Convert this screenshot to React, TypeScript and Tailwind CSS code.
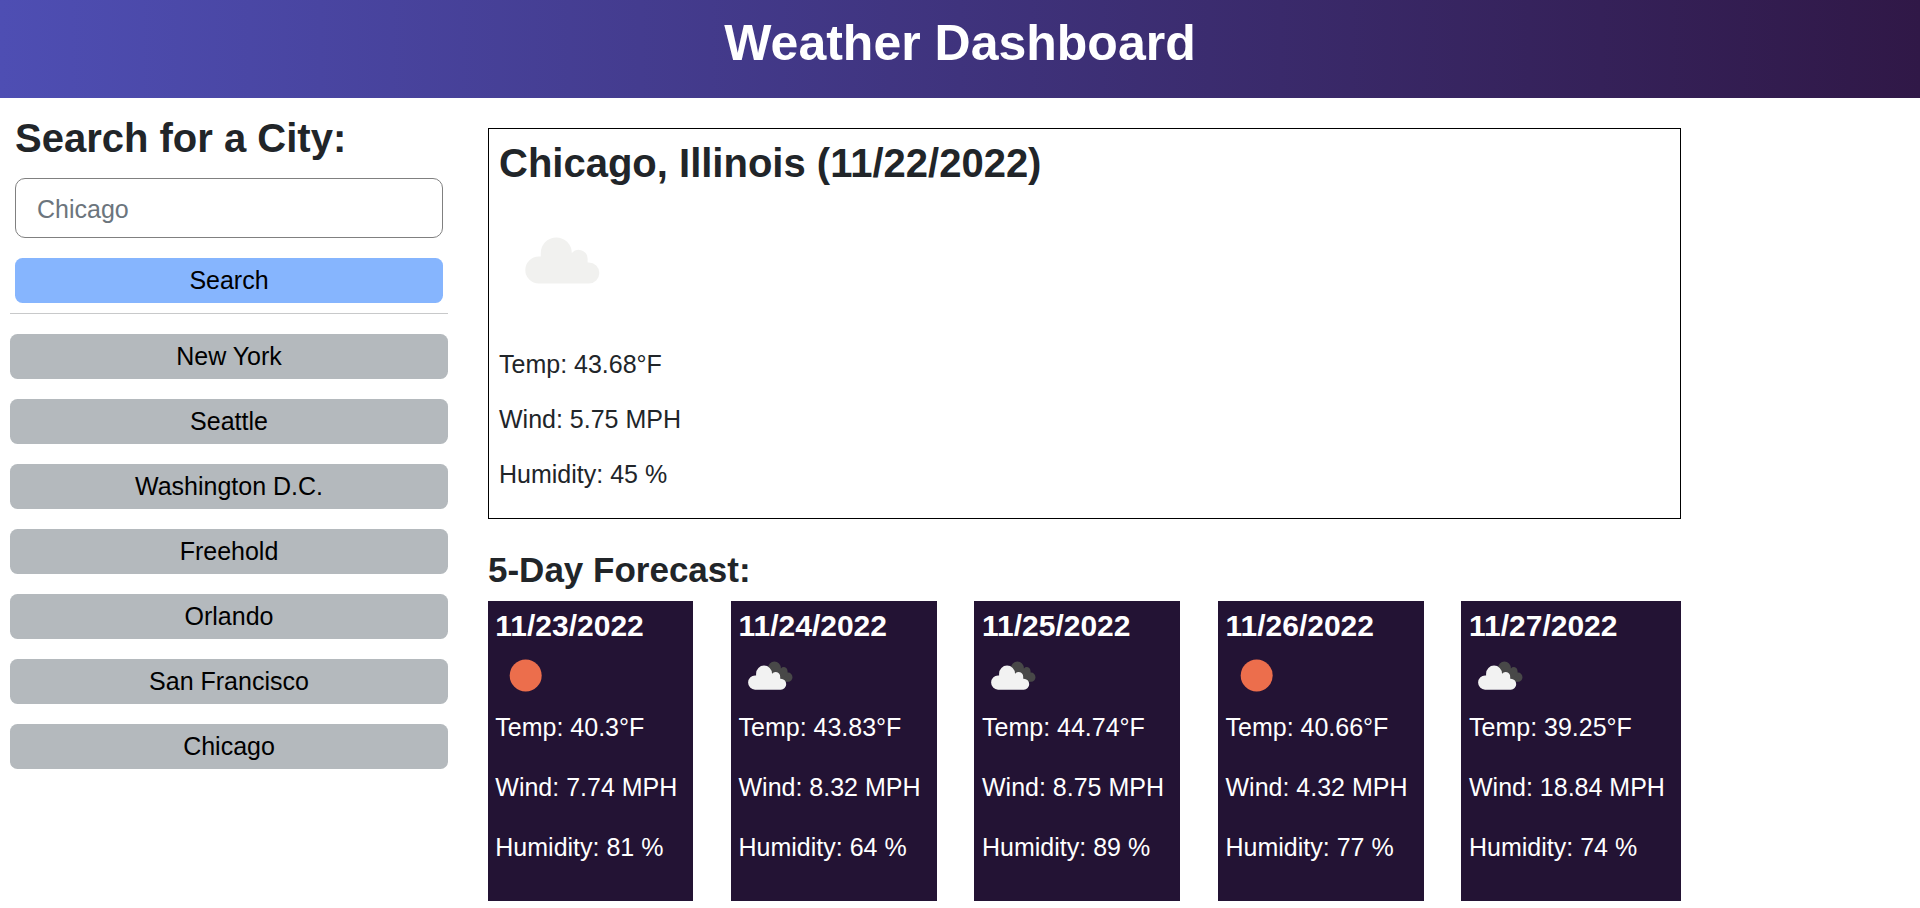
const cities = ["New York", "Seattle", "Washington D.C.", "Freehold", "Orlando", "San Francisco", "Chicago"];

type Day = { date: string; icon: "sun" | "clouds"; temp: string; wind: string; humidity: string };

const days: Day[] = [
  { date: "11/23/2022", icon: "sun", temp: "40.3", wind: "7.74", humidity: "81" },
  { date: "11/24/2022", icon: "clouds", temp: "43.83", wind: "8.32", humidity: "64" },
  { date: "11/25/2022", icon: "clouds", temp: "44.74", wind: "8.75", humidity: "89" },
  { date: "11/26/2022", icon: "sun", temp: "40.66", wind: "4.32", humidity: "77" },
  { date: "11/27/2022", icon: "clouds", temp: "39.25", wind: "18.84", humidity: "74" },
];

// Cloud outline, 74 x 46 units.
const CLOUD =
  "M13.5 46 A13.5 13.5 0 0 1 13.5 19 H15.5 V15.5 A15.5 15.5 0 0 1 46.5 15.5 A9 9 0 0 1 62.3 21.5 V25 H63.5 A10.5 10.5 0 0 1 63.5 46 Z";

function CloudIcon() {
  return (
    <svg className="block size-[125px]" viewBox="0 0 125 125">
      <path d={CLOUD} transform="translate(26.3 45.5)" fill="#f1f1ef" />
    </svg>
  );
}

function DayIcon({ kind }: { kind: Day["icon"] }) {
  return (
    <svg className="block size-[62px]" viewBox="0 0 62 62">
      {kind === "sun" ? (
        <circle cx="30.7" cy="31.5" r="16" fill="#ec6e4c" />
      ) : (
        <>
          <path d={CLOUD} transform="translate(22.4 17.6) scale(.42 .44)" fill="#484848" />
          <path d={CLOUD} transform="translate(9.1 21.5) scale(.515 .525)" fill="#f2f2f2" />
        </>
      )}
    </svg>
  );
}

export default function App() {
  return (
    <div className="h-[908px] overflow-hidden bg-white font-['Liberation_Sans',Arial,sans-serif] text-[25px] leading-[30px] text-[#212529]">
      <header className="h-[98px] bg-[linear-gradient(90deg,#4e4eb3,#301847)] pt-[13px] text-center">
        <h1 className="text-[50px] leading-[60px] font-bold text-white">Weather Dashboard</h1>
      </header>
      <div className="flex">
        <aside className="ml-[10px] w-[438px] pt-[16px]">
          <div className="px-[5px]">
            <h2 className="text-[40px] leading-[48px] font-bold">Search for a City:</h2>
            <input
              className="mt-4 block h-[60px] w-full rounded-[10px] border border-[#808080] bg-white px-[21px] pt-[2px] placeholder:text-[#6c757d]"
              placeholder="Chicago"
            />
            <button className="mt-5 block h-[45px] w-full rounded-[7.5px] bg-[#86b5fe] pb-[2px] text-black">
              Search
            </button>
          </div>
          <hr className="mt-[10px] border-[#c8c9ca]" />
          <div className="mt-5 flex flex-col gap-5">
            {cities.map((city) => (
              <button key={city} className="h-[45px] rounded-[7.5px] bg-[#b4b9bd] pb-[2px] text-black">
                {city}
              </button>
            ))}
          </div>
        </aside>
        <main className="ml-10 w-[1193px] pt-[30px]">
          <section className="h-[391px] border border-black px-[10px] pt-[10px]">
            <h2 className="text-[40px] leading-[48px] font-bold">Chicago, Illinois (11/22/2022)</h2>
            <div className="mt-[5px]">
              <CloudIcon />
            </div>
            <div className="mt-[32px] flex flex-col gap-[25px]">
              <p>Temp: 43.68°F</p>
              <p>Wind: 5.75 MPH</p>
              <p>Humidity: 45 %</p>
            </div>
          </section>
          <h3 className="mt-[30px] text-[35px] leading-[42px] font-bold">5-Day Forecast:</h3>
          <div className="mt-[10px] grid grid-cols-[205px_206px_206px_206px_220px] justify-between">
            {days.map((day) => (
              <article
                key={day.date}
                className="h-[300px] bg-[#231334] px-[8px] pt-[7px] text-white first:px-[7.3px]"
              >
                <h4 className="text-[30px] leading-[36px] font-bold">{day.date}</h4>
                <DayIcon kind={day.icon} />
                <div className="mt-[6px] flex flex-col gap-[30px] whitespace-nowrap">
                  <p>Temp: {day.temp}°F</p>
                  <p>Wind: {day.wind} MPH</p>
                  <p>Humidity: {day.humidity} %</p>
                </div>
              </article>
            ))}
          </div>
        </main>
      </div>
    </div>
  );
}
